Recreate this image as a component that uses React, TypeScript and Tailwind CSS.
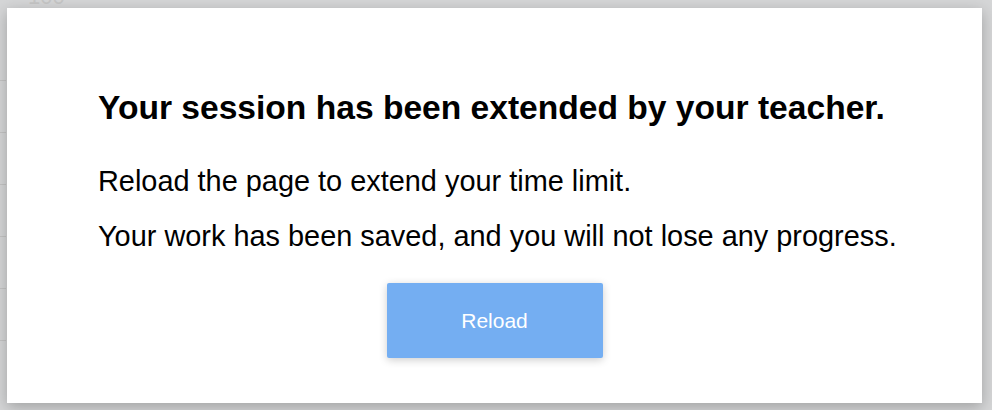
export default function App() {
  return (
    <div
      className="relative flex h-[410px] w-[992px] overflow-hidden bg-[#d5d6d7] pl-[7px] pt-[8px]"
      style={{ fontFamily: '"Liberation Sans", Arial, sans-serif' }}
    >
      {/* faint page behind the overlay */}
      <div className="absolute left-[28px] top-[-14px] text-[22px] leading-[22px] text-[#c6c6c6]">100</div>
      <div className="absolute left-0 top-[80px] flex flex-col gap-[51px]">
        {[0, 1, 2, 3, 4, 5].map((i) => (
          <div key={i} className="h-[1px] w-[6px] bg-[#c4c4c4]" />
        ))}
      </div>

      <div className="relative flex h-[395px] w-[975px] flex-col bg-white px-[91px] pt-[81px] text-black shadow-[0_4px_14px_rgba(0,0,0,0.25)]">
        <h1 className="whitespace-nowrap text-[33.6px] font-bold leading-[38px]">
          Your session has been extended by your teacher.
        </h1>
        <p className="mt-[37px] whitespace-nowrap text-[28.9px] leading-[34px]">
          Reload the page to extend your time limit.
        </p>
        <p className="mt-[21px] whitespace-nowrap text-[28.9px] leading-[34px]">
          Your work has been saved, and you will not lose any progress.
        </p>
        <div className="mt-[30px] flex justify-center">
          <button className="h-[75px] w-[216px] rounded-[2px] bg-[#74aef2] text-[21px] text-white shadow-[0_2px_8px_rgba(0,0,0,0.2)]">
            Reload
          </button>
        </div>
      </div>
    </div>
  );
}
